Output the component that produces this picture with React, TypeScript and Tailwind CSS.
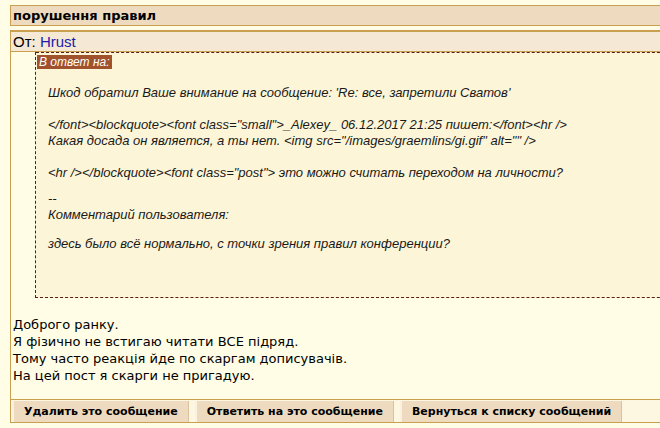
import React from 'react'

// Quoted message lines, with the gap (px) that comes before each one
const quoteLines: { text: string; gap: number }[] = [
  { text: "Шкод обратил Ваше внимание на сообщение: 'Re: все, запретили Сватов'", gap: 15 },
  { text: '</font><blockquote><font class="small">_Alexey_ 06.12.2017 21:25 пишет:</font><hr />', gap: 16 },
  { text: 'Какая досада он является, а ты нет. <img src="/images/graemlins/gi.gif" alt="" />', gap: 0 },
  { text: '<hr /></blockquote><font class="post"> это можно считать переходом на личности?', gap: 16 },
  { text: '--', gap: 10 },
  { text: 'Комментарий пользователя:', gap: 0 },
  { text: 'здесь было всё нормально, с точки зрения правил конференции?', gap: 13 },
]

const bodyLines = [
  'Доброго ранку.',
  'Я фізично не встигаю читати ВСЕ підряд.',
  'Тому часто реакція йде по скаргам дописувачів.',
  'На цей пост я скарги не пригадую.',
]

const actions = [
  'Удалить это сообщение',
  'Ответить на это сообщение',
  'Вернуться к списку сообщений',
]

export default function App() {
  return (
    <div className="w-[660px] h-[428px] overflow-hidden bg-[#fffde6]">
      <div className="w-[720px] pl-[10px] pt-[5px]">
        {/* Topic title */}
        <div className="h-[21px] border border-[#c9a050] bg-[#eedbbf] px-[2px] font-['DejaVu_Sans',sans-serif] text-[13px] font-bold leading-[19px] text-black">
          порушення правил
        </div>

        {/* Message */}
        <div className="mt-[4px] border-t-2 border-l border-b border-[#c9a050]">
          <div className="h-[20px] border-b border-[#c9a050] bg-[#f5e8d5] px-[2px] font-['Liberation_Sans',sans-serif] text-[15px] leading-[19px] text-black">
            От: <span className="text-[#1c1ca8]">Hrust</span>
          </div>

          <div className="ml-[24px] h-[246px] border-l border-b border-dashed border-[#5a1e14] bg-[#fdf5d8] pl-px pt-px font-['Liberation_Sans',sans-serif] text-[13px] leading-[16px] text-[#1a1a1a]">
            <div className="border-t border-dashed border-[#5a1e14] -mt-px -ml-px" />
            <div className="mt-[1px]">
              <span className="inline-block bg-[#a0522d] px-[2px] text-[12px] italic leading-[14px] text-white [font-style:italic]">
                В ответ на:
              </span>
            </div>
            <div className="pl-[11px]">
              {quoteLines.map((line, i) => (
                <div key={i} style={{ marginTop: line.gap }} className="whitespace-nowrap italic [font-style:italic]">
                  {line.text}
                </div>
              ))}
            </div>
          </div>

          <div className="mt-[18px] px-[2px] font-['DejaVu_Sans',sans-serif] text-[13px] leading-[17px] text-black">
            {bodyLines.map((line) => (
              <div key={line}>{line}</div>
            ))}
          </div>

          {/* Action buttons */}
          <div className="mt-[15px] flex h-[23px] gap-[6px] border-t border-[#c9a050] bg-[#fdf6e0] pl-px pt-px">
            {actions.map((label) => (
              <button
                key={label}
                className="h-[21px] border-l-2 border-r border-l-[#fbf1e0] border-r-[#d9c29c] bg-[#eedbbf] px-[10px] font-['DejaVu_Sans',sans-serif] text-[11px] font-bold leading-[21px] text-black"
              >
                {label}
              </button>
            ))}
          </div>
        </div>
      </div>
    </div>
  )
}
